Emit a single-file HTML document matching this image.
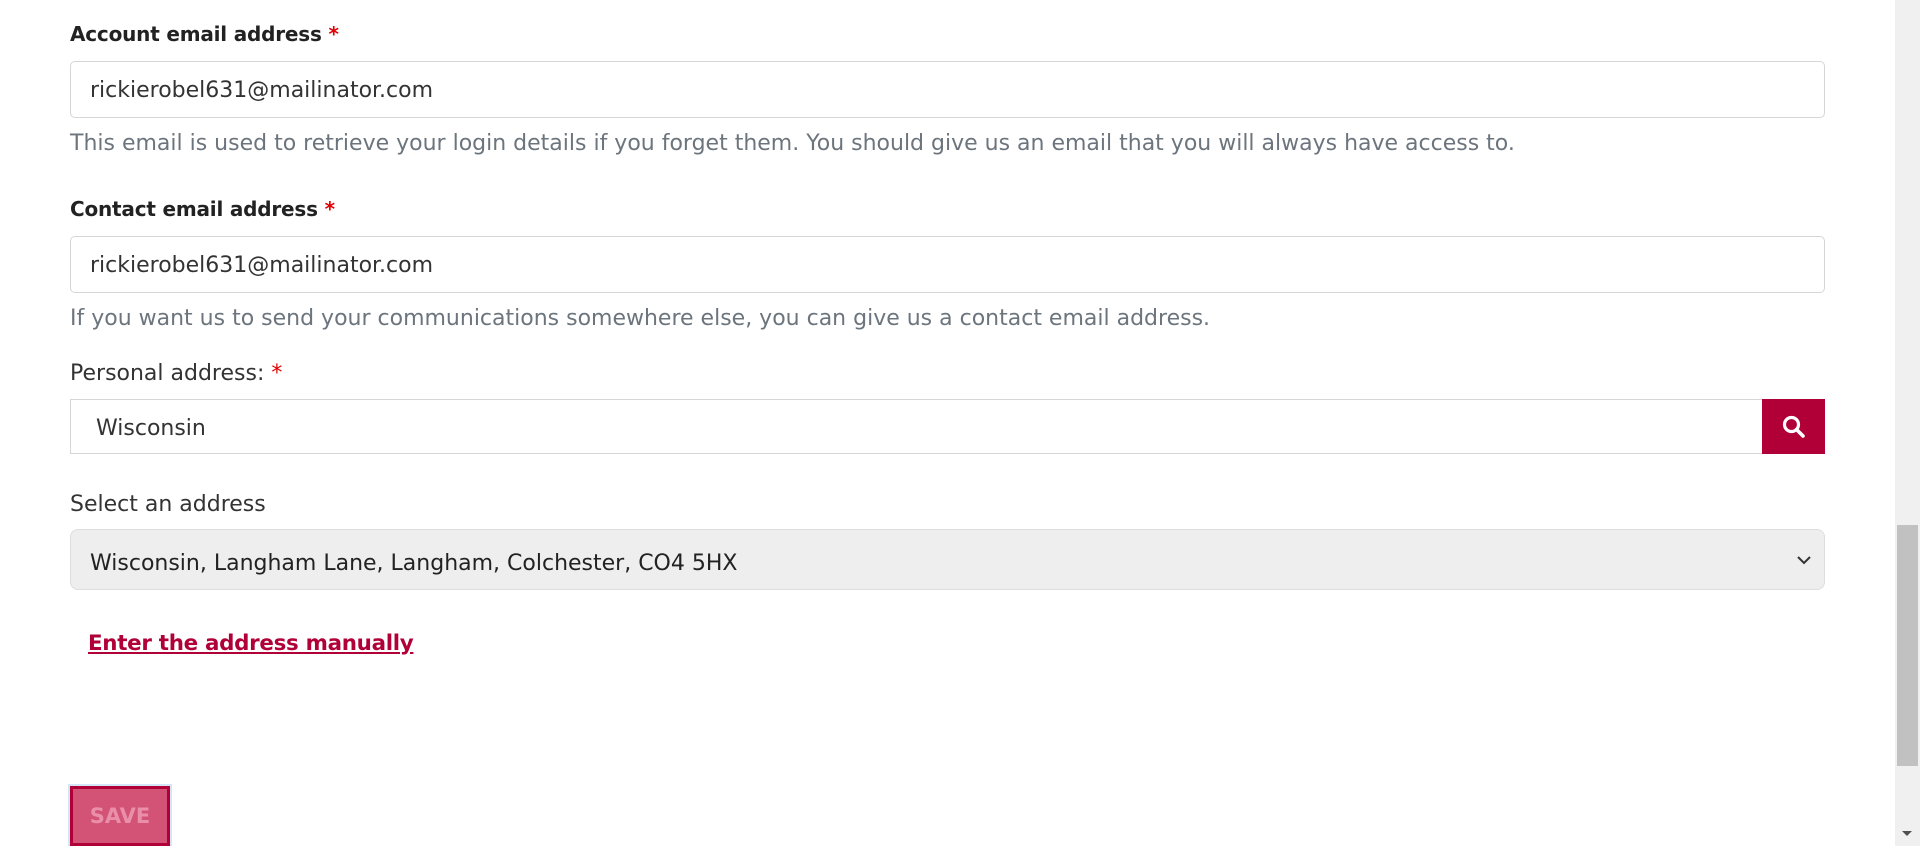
<!DOCTYPE html>
<html><head><meta charset="utf-8"><style>
*{box-sizing:border-box;margin:0;padding:0}
body{width:1920px;height:846px;overflow:hidden;background:#fff;font-family:"DejaVu Sans",sans-serif;color:#212529;position:relative}
.abs{position:absolute}
.lbl{font-weight:bold;font-size:20px;color:#222;left:70px;letter-spacing:-0.2px}
.star{color:#e00000}
.inp{left:70px;width:1755px;border:1px solid #d6d6d6;border-radius:5px;font-size:22px;color:#333;padding-left:19px;display:flex;align-items:center}
.help{left:70px;font-size:22px;color:#6c757d}
</style></head><body>
<div class="abs lbl" style="top:22px">Account email address <span class="star">*</span></div>
<div class="abs inp" style="top:61px;height:57px;padding-top:2px">rickierobel631@mailinator.com</div>
<div class="abs help" style="top:131px">This email is used to retrieve your login details if you forget them. You should give us an email that you will always have access to.</div>
<div class="abs lbl" style="top:197px">Contact email address <span class="star">*</span></div>
<div class="abs inp" style="top:236px;height:57px;padding-top:2px">rickierobel631@mailinator.com</div>
<div class="abs help" style="top:306px">If you want us to send your communications somewhere else, you can give us a contact email address.</div>
<div class="abs" style="left:70px;top:361px;font-size:22px;color:#333">Personal address: <span class="star">*</span></div>
<div class="abs inp" style="top:399px;height:55px;width:1693px;border-radius:0;padding-left:25px;padding-top:3px">Wisconsin</div>
<div class="abs" style="left:1762px;top:399px;width:63px;height:55px;background:#b10037;display:flex;align-items:center;justify-content:center">
<svg width="26" height="26" viewBox="0 0 26 26"><circle cx="10.5" cy="10.5" r="7" fill="none" stroke="#fff" stroke-width="3.2"/><path d="M15.5 15.5L22 22" stroke="#fff" stroke-width="3.6" stroke-linecap="round"/></svg></div>
<div class="abs" style="left:70px;top:492px;font-size:22px;color:#333">Select an address</div>
<div class="abs inp" style="top:529px;height:61px;background:#eee;border-color:#ddd;border-radius:8px;color:#222;padding-top:8px">Wisconsin, Langham Lane, Langham, Colchester, CO4 5HX
<svg class="abs" style="right:12px;top:24px" width="16" height="12" viewBox="0 0 16 12"><path d="M2 3l6 6 6-6" fill="none" stroke="#333" stroke-width="2"/></svg></div>
<div class="abs" style="left:88px;top:631px;font-size:21.4px;font-weight:bold;color:#b10037;text-decoration:underline;letter-spacing:-0.3px">Enter the address manually</div>
<div class="abs" style="left:68px;top:784px;width:104px;height:62px;background:#d4e5f7"></div>
<div class="abs" style="left:70px;top:786px;width:100px;height:60px;background:#d25376;border:3px solid #b10037;color:#ea8fa9;font-weight:bold;font-size:21px;display:flex;align-items:center;justify-content:center">SAVE</div>
<div class="abs" style="left:1895px;top:0;width:25px;height:846px;background:#f0f0f0"></div>
<div class="abs" style="left:1897px;top:525px;width:21px;height:241px;background:#c1c1c1"></div>
<div class="abs" style="left:1902px;top:831px;width:0;height:0;border-left:5px solid transparent;border-right:5px solid transparent;border-top:5px solid #505050"></div>
</body></html>
